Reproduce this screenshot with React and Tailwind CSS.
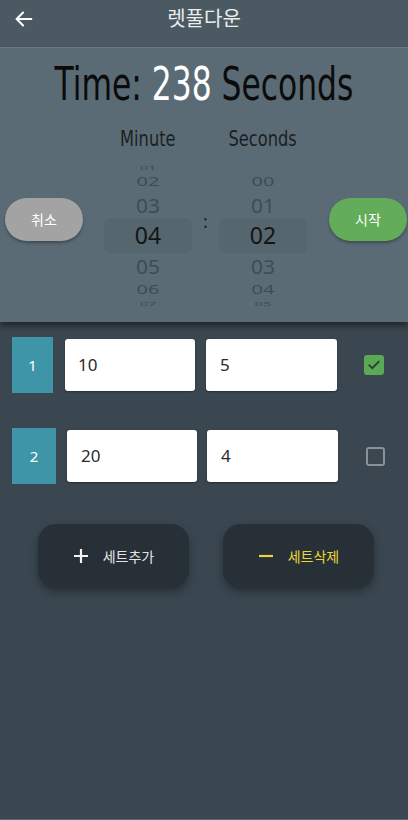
import React, { useState } from "react";

const narrow = { fontFamily: '"Liberation Sans Narrow", "DejaVu Sans Condensed", "Liberation Sans", sans-serif' };
const kr = { fontFamily: '"Noto Sans CJK KR", "Noto Sans", sans-serif' };
const num = { fontFamily: '"Noto Sans", "Liberation Sans", sans-serif' };

const minuteWheel = [
  { v: "01", h: "h-[8px]", cls: "text-[15px] text-[#3f4b54] scale-y-[0.3]" },
  { v: "02", h: "h-[20px]", cls: "text-[20px] text-[#3f4b54] scale-y-[0.6]" },
  { v: "03", h: "h-[26px]", cls: "text-[21px] text-[#3f4b54] scale-y-[0.95]" },
  { v: "04", h: "h-[35px]", cls: "text-[23px] text-[#141414]", sel: true },
  { v: "05", h: "h-[26px]", cls: "text-[21px] text-[#3f4b54] scale-y-[0.95]" },
  { v: "06", h: "h-[22px]", cls: "text-[20px] text-[#3f4b54] scale-y-[0.6]" },
  { v: "07", h: "h-[7px]", cls: "text-[15px] text-[#3f4b54] scale-y-[0.3]" },
];

const secondWheel = [
  { v: "", h: "h-[8px]", cls: "" },
  { v: "00", h: "h-[20px]", cls: "text-[20px] text-[#3f4b54] scale-y-[0.6]" },
  { v: "01", h: "h-[26px]", cls: "text-[21px] text-[#3f4b54] scale-y-[0.95]" },
  { v: "02", h: "h-[35px]", cls: "text-[23px] text-[#141414]", sel: true },
  { v: "03", h: "h-[26px]", cls: "text-[21px] text-[#3f4b54] scale-y-[0.95]" },
  { v: "04", h: "h-[22px]", cls: "text-[20px] text-[#3f4b54] scale-y-[0.6]" },
  { v: "05", h: "h-[7px]", cls: "text-[15px] text-[#3f4b54] scale-y-[0.3]" },
];

const Wheel = ({ label, items }) => (
  <div className="w-[88px] flex flex-col items-center">
    <div className="h-[44px] leading-[38px] text-[22px] text-[#1c1f22] scale-x-[0.82]" style={narrow}>
      {label}
    </div>
    {items.map((it, i) => (
      <div
        key={i}
        className={`w-full flex items-center justify-center overflow-visible ${it.h} ${it.sel ? "bg-[#56666f] rounded-md" : ""}`}
      >
        <span className={`block leading-none ${it.cls}`} style={num}>
          {it.v}
        </span>
      </div>
    ))}
  </div>
);

const SetRow = ({ idx, a, b, checked, badgeW, gap1, gap2, pad }) => (
  <div className="flex items-center pl-[12px]">
    <div
      className={`h-[56px] ${badgeW} bg-[#3e95a8] flex items-center justify-center text-white text-[15px]`}
      style={num}
    >
      {idx}
    </div>
    <div className={`${gap1} w-[130px] h-[52px] bg-white rounded-[3px] shadow-[0_1px_2px_rgba(0,0,0,0.35)] flex items-center ${pad} text-[17px] text-[#2b2b2b]`} style={num}>
      {a}
    </div>
    <div className={`${gap2} w-[131px] h-[52px] bg-white rounded-[3px] shadow-[0_1px_2px_rgba(0,0,0,0.35)] flex items-center pl-[14px] text-[17px] text-[#2b2b2b]`} style={num}>
      {b}
    </div>
    {checked ? (
      <div className="ml-[27px] w-[20px] h-[20px] rounded-[3px] bg-[#5aa957] flex items-center justify-center">
        <svg width="14" height="14" viewBox="0 0 24 24" fill="none" stroke="#2d3a30" strokeWidth="3" strokeLinecap="square">
          <path d="M4 12.5l5 5L20 6.5" />
        </svg>
      </div>
    ) : (
      <div className="ml-[28px] w-[19px] h-[19px] rounded-[3px] border-2 border-[#8b9196]" />
    )}
  </div>
);

export default function App() {
  const [total] = useState(238);
  const [sets] = useState([
    { reps: 10, weight: 5, done: true },
    { reps: 20, weight: 4, done: false },
  ]);

  return (
    <div className="w-[408px] h-[820px] flex flex-col bg-[#3a4750] overflow-hidden" style={kr}>
      <div className="h-[48px] shrink-0 bg-[#4a5962] border-b border-[#6d7d87] flex items-center relative">
        <button className="absolute left-[13px] top-[8px] text-white">
          <svg width="22" height="22" viewBox="0 0 24 24" fill="none" stroke="currentColor" strokeWidth="2.2" strokeLinecap="round" strokeLinejoin="round">
            <path d="M20 12H4" />
            <path d="M11 5l-7 7 7 7" />
          </svg>
        </button>
        <div className="w-full text-center text-[20px] text-[#ececec] -mt-[12px]" style={kr}>
          렛풀다운
        </div>
      </div>

      <div className="h-[274px] shrink-0 bg-[#5a6b76] flex flex-col relative z-10 shadow-[0_4px_6px_rgba(0,0,0,0.45)]">
        <div className="h-[72px] flex items-center justify-center">
          <div className="whitespace-nowrap text-[42px] leading-none text-[#0b0b0b] scale-x-[0.83] scale-y-[1.12]" style={narrow}>
            Time: <span className="text-white">{total}</span> Seconds
          </div>
        </div>
        <div className="flex items-start pl-[5px]">
          <button
            className="mt-[78px] w-[78px] h-[43px] rounded-full bg-[#a3a3a3] text-white text-[14px] shadow-[0_2px_3px_rgba(0,0,0,0.3)]"
            style={kr}
          >
            취소
          </button>
          <div className="ml-[21px]">
            <Wheel label="Minute" items={minuteWheel} />
          </div>
          <div className="w-[27px] mt-[88px] text-center text-[18px] text-[#1c1f22]" style={num}>
            :
          </div>
          <Wheel label="Seconds" items={secondWheel} />
          <button
            className="ml-[22px] mt-[78px] w-[78px] h-[43px] rounded-full bg-[#63ad5a] text-white text-[14px] shadow-[0_2px_3px_rgba(0,0,0,0.3)]"
            style={kr}
          >
            시작
          </button>
        </div>
      </div>

      <div className="flex-1 flex flex-col border-b border-[#5b6771]">
        <div className="pt-[15px]">
          <SetRow idx={1} a={String(sets[0].reps)} b={String(sets[0].weight)} checked={sets[0].done} badgeW="w-[41px]" gap1="ml-[12px]" gap2="ml-[11px]" pad="pl-[13px]" />
        </div>
        <div className="pt-[35px]">
          <SetRow idx={2} a={String(sets[1].reps)} b={String(sets[1].weight)} checked={sets[1].done} badgeW="w-[44px]" gap1="ml-[11px]" gap2="ml-[10px]" pad="pl-[14px]" />
        </div>
        <div className="flex pl-[38px] gap-[34px] pt-[40px]">
          <button className="w-[151px] h-[64px] rounded-[18px] bg-[#272f37] shadow-[0_4px_8px_rgba(0,0,0,0.35)] flex items-center justify-center gap-[14px]">
            <svg width="16" height="16" viewBox="0 0 16 16" stroke="#f2f2f2" strokeWidth="2.2">
              <path d="M8 1v14M1 8h14" />
            </svg>
            <span className="text-[14px] text-[#e4e4e4]" style={kr}>세트추가</span>
          </button>
          <button className="w-[151px] h-[64px] rounded-[18px] bg-[#272f37] shadow-[0_4px_8px_rgba(0,0,0,0.35)] flex items-center justify-center gap-[14px]">
            <svg width="16" height="16" viewBox="0 0 16 16" stroke="#e8d63a" strokeWidth="2.2">
              <path d="M1 8h14" />
            </svg>
            <span className="text-[14px] text-[#e8d63a]" style={kr}>세트삭제</span>
          </button>
        </div>
      </div>
    </div>
  );
}
